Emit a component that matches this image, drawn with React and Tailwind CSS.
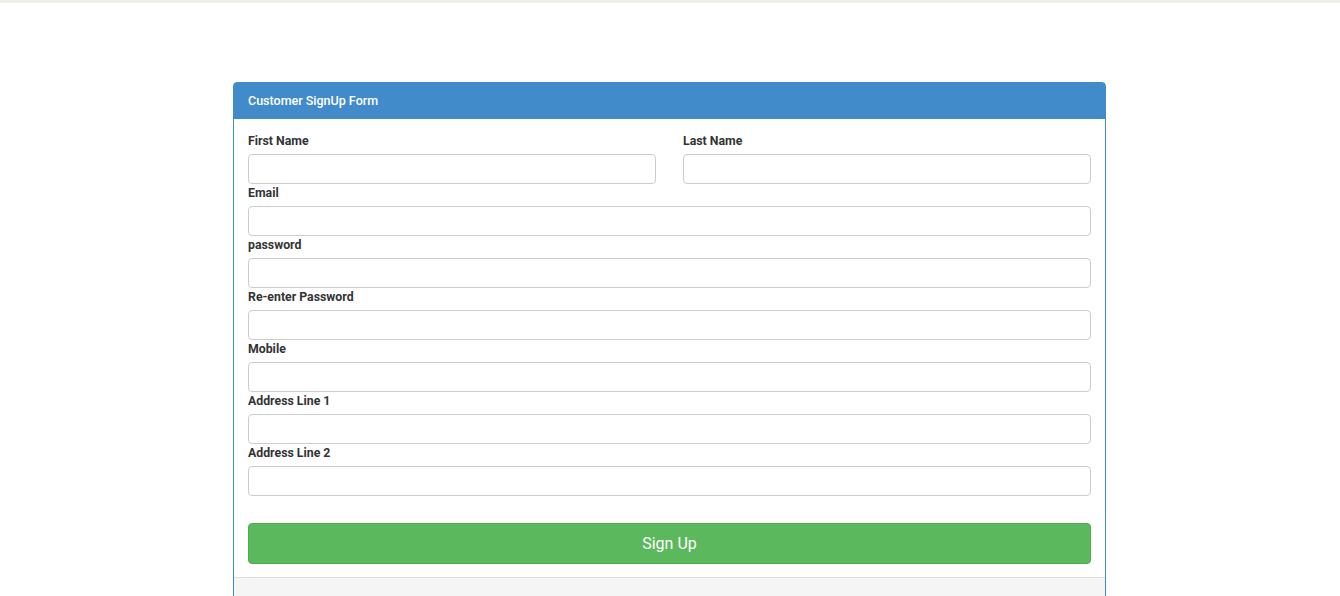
const fields = [
  'Email',
  'password',
  'Re-enter Password',
  'Mobile',
  'Address Line 1',
  'Address Line 2',
]

function Field({ label, type = 'text' }) {
  return (
    <div className="flex flex-col">
      <label className="mb-[4px] h-[18px] text-[12.3px] font-bold leading-[19px] text-[#333]">
        {label}
      </label>
      <input
        type={type}
        className="h-[30px] w-full rounded-[4px] border border-[#ccc] bg-white px-3 text-[12px] outline-none"
      />
    </div>
  )
}

export default function App() {
  return (
    <div
      className="min-h-[596px] bg-white"
      style={{ fontFamily: 'Roboto, "Liberation Sans", sans-serif' }}
    >
      <div className="h-[3px] bg-[#efeee8]" />
      <div className="flex pl-[233px] pt-[79px]">
        <div className="w-[873px] rounded-t-[4px] border border-[#428bca] bg-white">
          <div className="flex h-[36px] items-center bg-[#428bca] px-[14px] text-[12.5px] font-medium text-white">
            Customer SignUp Form
          </div>
          <div className="px-[14px] pt-[13px] pb-[13px]">
            <div className="grid grid-cols-2 gap-x-[27px]">
              <Field label="First Name" />
              <Field label="Last Name" />
            </div>
            {fields.map((f) => (
              <Field
                key={f}
                label={f}
                type={f.toLowerCase().includes('password') ? 'password' : 'text'}
              />
            ))}
            <button className="mt-[27px] h-[41px] w-full rounded-[4px] border border-[#4cae4c] bg-[#5cb85c] text-[16px] text-white">
              Sign Up
            </button>
          </div>
          <div className="h-[40px] border-t border-[#ddd] bg-[#f5f5f5]" />
        </div>
      </div>
    </div>
  )
}
